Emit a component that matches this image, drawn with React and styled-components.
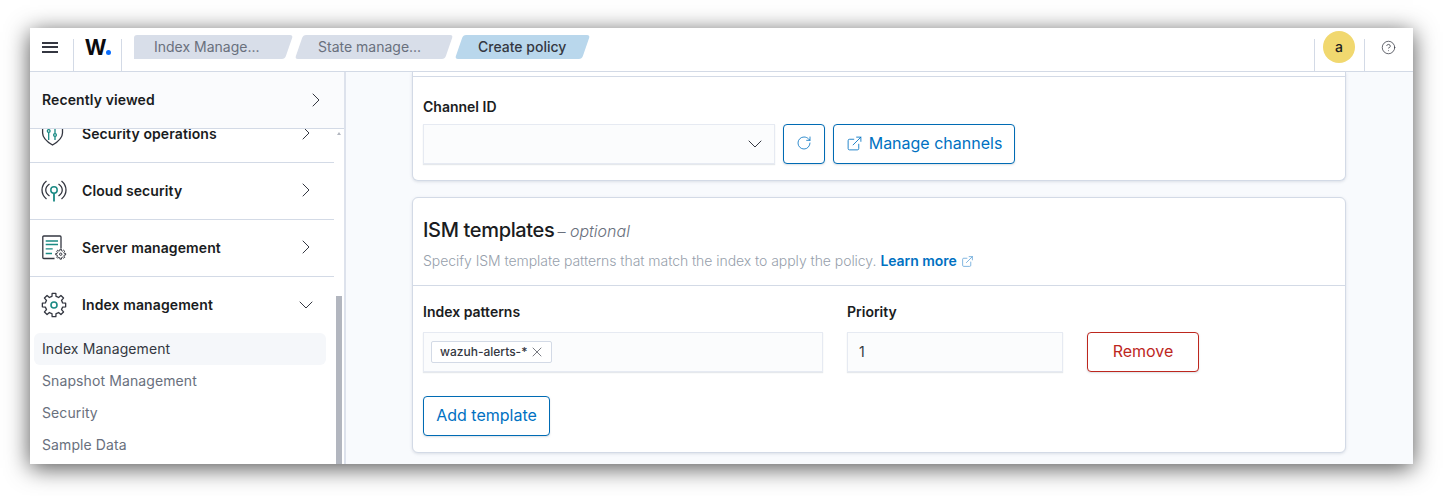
import React from "react"
import styled, { createGlobalStyle } from "styled-components"
import { ChevronRight, ChevronDown, ExternalLink, RotateCw, X, CircleHelp } from "lucide-react"

const GlobalStyle = createGlobalStyle`
  html, body {
    margin: 0;
    background: #fff;
    font-family: Inter, "Noto Sans", sans-serif;
    color: #1a1c21;
  }
  * {
    box-sizing: border-box;
  }
`

const Page = styled.div`
  padding: 28px 30px 32px;
`

const Window = styled.div`
  width: 1383px;
  height: 436px;
  background: #fff;
  display: flex;
  flex-direction: column;
  overflow: hidden;
  box-shadow: 0 4px 22px rgba(0, 0, 0, 0.68);
`

const Header = styled.header`
  height: 44px;
  flex: none;
  display: flex;
  align-items: stretch;
  border-bottom: 1px solid #d3dae6;
  background: #fff;
`

const HeaderCell = styled.div`
  width: ${(p) => p.$width}px;
  flex: none;
  display: flex;
  align-items: center;
  justify-content: center;
  position: relative;
  ${(p) =>
    p.$divider &&
    `&::after {
      content: "";
      position: absolute;
      ${p.$divider}: 0;
      top: 11px;
      bottom: 0;
      width: 1px;
      background: #d3dae6;
    }`}
`

const Burger = styled.span`
  width: 16px;
  height: 11px;
  margin: -5px 0 0 -5px;
  border-top: 2px solid #343741;
  border-bottom: 2px solid #343741;
  position: relative;
  &::after {
    content: "";
    position: absolute;
    left: 0;
    right: 0;
    top: 2.5px;
    height: 2px;
    background: #343741;
  }
`

const Logo = styled.span`
  font-size: 21px;
  font-weight: 700;
  letter-spacing: -0.5px;
  color: #0b0b0f;
  line-height: 1;
  margin-top: -5px;
  display: flex;
  align-items: baseline;
`

const LogoDot = styled.i`
  width: 5px;
  height: 5px;
  border-radius: 50%;
  background: #0a6eff;
`

const Crumbs = styled.nav`
  flex: 1;
  display: flex;
  align-items: center;
  gap: 10px;
  padding: 0 0 5px 12px;
`

const Crumb = styled.span`
  height: 24px;
  width: ${(p) => p.$width}px;
  display: flex;
  align-items: center;
  padding: 0 0 2px ${(p) => (p.$first ? 20 : 19)}px;
  font-size: 14px;
  position: relative;
  z-index: 0;
  font-weight: ${(p) => (p.$active ? 500 : 400)};
  color: ${(p) => (p.$active ? "#343741" : "#69707d")};
  &::before {
    content: "";
    position: absolute;
    inset: 0;
    z-index: -1;
    border-radius: 3px;
    transform: skewX(-19deg);
    background: ${(p) => (p.$active ? "#b9d7ec" : "#d8dee9")};
  }
  ${(p) =>
    p.$first &&
    `clip-path: inset(0 -10px 0 0);
    &::after {
      content: "";
      position: absolute;
      left: 0;
      top: 0;
      bottom: 0;
      width: 16px;
      z-index: -1;
      border-radius: 3px;
      background: #d8dee9;
    }`}
`

const Avatar = styled.span`
  width: 32px;
  height: 32px;
  border-radius: 50%;
  background: #f1d86f;
  display: flex;
  align-items: center;
  justify-content: center;
  font-size: 14px;
  font-weight: 500;
  margin-top: -6px;
  color: #1a1c21;
`

const HelpWrap = styled.span`
  display: flex;
  margin: -5px 0 0 -1px;
  color: #343741;
`

const Body = styled.div`
  flex: 1;
  min-height: 0;
  display: flex;
`

const Sidebar = styled.aside`
  width: 316px;
  flex: none;
  display: flex;
  flex-direction: column;
  border-right: 2px solid #dde2ec;
  position: relative;
  overflow: hidden;
  letter-spacing: 0.1px;
`

const Recent = styled.div`
  height: 57px;
  flex: none;
  display: flex;
  align-items: center;
  justify-content: space-between;
  padding: 0 16px 1px 12px;
  background: #fafbfd;
  border-bottom: 1px solid #d3dae6;
  font-size: 14px;
  font-weight: 600;
  position: relative;
  z-index: 1;
`

const NavList = styled.div`
  margin-top: -23px;
  width: 304px;
`

const NavRow = styled.div`
  height: 57px;
  display: flex;
  align-items: center;
  padding: 0 16px 2px 12px;
  font-size: 14px;
  font-weight: 600;
  border-bottom: ${(p) => (p.$plain ? "none" : "1px solid #d3dae6")};
`

const NavIcon = styled.svg`
  width: 24px;
  height: 24px;
  flex: none;
  margin-right: 16px;
  fill: none;
  overflow: visible;
  stroke: #343741;
  stroke-width: 1.3;
`

const NavLabel = styled.span`
  flex: 1;
`

const SubList = styled.div`
  display: flex;
  flex-direction: column;
  padding: 0 8px 0 4px;
  margin-top: -1px;
`

const SubItem = styled.div`
  height: 32px;
  display: flex;
  align-items: center;
  padding: 0 0 1px 8px;
  border-radius: 6px;
  font-size: 14px;
  background: ${(p) => (p.$active ? "#f5f7fa" : "transparent")};
  color: ${(p) => (p.$active ? "#343741" : "#69707d")};
`

const ScrollThumb = styled.div`
  position: absolute;
  right: 2px;
  bottom: 0;
  top: 224px;
  width: 6px;
  background: #b2b6bf;
`

const ScrollArrow = styled.div`
  position: absolute;
  right: 3px;
  top: 60px;
  width: 0;
  height: 0;
  border-left: 2.5px solid transparent;
  border-right: 2.5px solid transparent;
  border-bottom: 3px solid #b2b6bf;
`

const Main = styled.main`
  flex: 1;
  min-width: 0;
  background: #f8fafd;
  padding: 0 67px 0 66px;
  display: flex;
  flex-direction: column;
  gap: 16px;
  overflow: hidden;
`

const Card = styled.section`
  flex: none;
  background: #fff;
  border: 1px solid #d3dae6;
  border-radius: ${(p) => (p.$clipped ? "0 0 6px 6px" : "6px")};
  ${(p) => p.$clipped && "border-top: none;"}
  box-shadow: 0 1px 3px rgba(152, 162, 179, 0.3);
`

const Rule = styled.hr`
  margin: ${(p) => (p.$top ? "4px" : "0")} 0 0;
  border: none;
  border-top: 1px solid #d3dae6;
`

const CardBody = styled.div`
  padding: ${(p) => p.$padding};
`

const FieldLabel = styled.label`
  display: block;
  font-size: 14px;
  font-weight: 600;
  line-height: 20px;
  margin-bottom: ${(p) => p.$gap || 7}px;
`

const Row = styled.div`
  display: flex;
  align-items: flex-start;
  gap: ${(p) => p.$gap}px;
`

const Input = styled.div`
  width: ${(p) => p.$width}px;
  height: 40px;
  display: flex;
  align-items: center;
  justify-content: ${(p) => (p.$select ? "flex-end" : "flex-start")};
  padding: 0 ${(p) => (p.$select ? 7 : p.$pad || 11)}px;
  background: #fbfcfd;
  border: 1px solid #e6eaf2;
  box-shadow: 0 1px 1px rgba(152, 162, 179, 0.25);
  font-size: 14px;
  color: #343741;
`

const PriorityValue = styled.span`
  margin-top: -2px;
`

const Button = styled.button`
  height: 40px;
  width: ${(p) => p.$width}px;
  padding: 0 0 2px;
  display: flex;
  align-items: center;
  justify-content: center;
  gap: 6px;
  font: inherit;
  font-size: 16px;
  background: #fff;
  border-radius: 4px;
  border: 1px solid ${(p) => (p.$danger ? "#bd271e" : "#006bb4")};
  color: ${(p) => (p.$danger ? "#bd271e" : "#0071c2")};
  box-shadow: 0 1px 2px rgba(152, 162, 179, 0.35);
`

const Title = styled.h2`
  margin: 0;
  font-size: 20px;
  font-weight: 500;
  line-height: 28px;
  letter-spacing: -0.35px;
  display: flex;
  align-items: baseline;
  gap: 3px;
`

const Optional = styled.span`
  font-size: 16px;
  font-weight: 300;
  font-style: italic;
  letter-spacing: 0;
  color: #69707d;
`

const Description = styled.p`
  margin: 6px 0 0;
  font-size: 14px;
  line-height: 20px;
  font-weight: 300;
  letter-spacing: -0.05px;
  color: #979fac;
  display: flex;
  align-items: center;
`

const LearnMore = styled.a`
  color: #0071c2;
  font-weight: 600;
  margin-left: 4px;
  display: flex;
  align-items: center;
  gap: 4px;
`

const LearnIcon = styled(ExternalLink)`
  color: #5a9fd6;
  margin-top: 1px;
`

const Chip = styled.span`
  height: 22px;
  display: flex;
  align-items: center;
  gap: 2px;
  padding: 0 6px 1px 8px;
  background: #fff;
  border: 1px solid #d3dae6;
  border-radius: 2px;
  font-size: 12px;
  font-weight: 500;
  color: #343741;
`

const TemplateFields = styled(Row)`
  margin-bottom: 24px;
`

const Field = styled.div`
  flex: none;
`

const RemoveSlot = styled.div`
  margin-top: 30px;
`

const INK = "#343741"
const TEAL = "#1b8a84"

// cog outline with n teeth, used by the big and the small gear
const gearPath = (cx, cy, outer, inner, teeth) => {
  const points = []
  const step = (Math.PI * 2) / teeth
  for (let i = 0; i < teeth; i++) {
    const a = i * step - Math.PI / 2
    const spots = [
      [inner, a - step * 0.5],
      [inner, a - step * 0.3],
      [outer, a - step * 0.2],
      [outer, a + step * 0.2],
      [inner, a + step * 0.3],
    ]
    spots.forEach(([r, t]) => {
      points.push(`${(cx + r * Math.cos(t)).toFixed(2)} ${(cy + r * Math.sin(t)).toFixed(2)}`)
    })
  }
  return `M${points.join("L")}Z`
}

const ShieldIcon = () => (
  <NavIcon viewBox="0 0 24 24">
    <path d="M.6 3 10.500 0l10 3v9c0 5.500-4.800 9-10 12C5.400 21 .6 17.500.6 12z" />
    <g stroke={TEAL}>
      <path d="M6.700 8v11M13 8v11" />
      <circle cx="6.700" cy="10" r="1.400" fill="#fff" />
      <circle cx="13" cy="14" r="1.400" fill="#fff" />
    </g>
  </NavIcon>
)

const SignalIcon = () => (
  <NavIcon viewBox="0 0 24 24">
    <path d="M4.500 3C-1.500 8-1.500 16 4.500 21M19.500 3c6 5 6 13 0 18" />
    <path d="M7.500 6C2.500 9.500 2.500 14.500 7.500 18M16.500 6c5 3.500 5 8.500 0 12" />
    <circle cx="12" cy="12" r="3.200" stroke={TEAL} strokeWidth="1.500" />
    <path d="M12 15.200v8.300" stroke={TEAL} strokeWidth="1.800" />
  </NavIcon>
)

const ServerIcon = () => (
  <NavIcon viewBox="0 0 24 24">
    <path d="M12.500 23.500H1.800a1 1 0 0 1-1-1V2a1 1 0 0 1 1-1H18a1 1 0 0 1 1 1v11.500" />
    <path d="M3.700 6h12.300M3.700 9.500h12.300M3.700 13.800h7M3.700 18.500h6.300" stroke={TEAL} strokeWidth="1.300" />
    <path d={gearPath(18.700, 19.200, 5, 3.600, 8)} strokeWidth="1" />
    <circle cx="18.700" cy="19.200" r="1.200" strokeWidth="1" />
  </NavIcon>
)

const GearIcon = () => (
  <NavIcon viewBox="0 0 24 24">
    <path d={gearPath(12, 12, 11.800, 8.800, 8)} strokeLinejoin="round" />
    <circle cx="12" cy="12" r="3" stroke={TEAL} strokeWidth="1.600" />
  </NavIcon>
)

const navItems = [
  { label: "Security operations", icon: <ShieldIcon /> },
  { label: "Cloud security", icon: <SignalIcon /> },
  { label: "Server management", icon: <ServerIcon /> },
]

const subItems = ["Index Management", "Snapshot Management", "Security", "Sample Data"]

const App = () => (
  <Page>
    <GlobalStyle />
    <Window>
      <Header>
        <HeaderCell $width={44} $divider="right">
          <Burger />
        </HeaderCell>
        <HeaderCell $width={48} $divider="right">
          <Logo>
            W<LogoDot />
          </Logo>
        </HeaderCell>
        <Crumbs>
          <Crumb $first $width={155}>Index Manage...</Crumb>
          <Crumb $width={150}>State manage...</Crumb>
          <Crumb $active $width={127}>Create policy</Crumb>
        </Crumbs>
        <HeaderCell $width={50} $divider="left">
          <Avatar>a</Avatar>
        </HeaderCell>
        <HeaderCell $width={49} $divider="left">
          <HelpWrap>
            <CircleHelp size={15} strokeWidth={1.2} />
          </HelpWrap>
        </HeaderCell>
      </Header>
      <Body>
        <Sidebar>
          <Recent>
            Recently viewed
            <ChevronRight size={24} strokeWidth={1} color={INK} />
          </Recent>
          <NavList>
            {navItems.map((item) => (
              <NavRow key={item.label}>
                {item.icon}
                <NavLabel>{item.label}</NavLabel>
                <ChevronRight size={24} strokeWidth={1} color={INK} />
              </NavRow>
            ))}
            <NavRow $plain>
              <GearIcon />
              <NavLabel>Index management</NavLabel>
              <ChevronDown size={24} strokeWidth={1} color={INK} />
            </NavRow>
            <SubList>
              {subItems.map((name, i) => (
                <SubItem key={name} $active={i === 0}>{name}</SubItem>
              ))}
            </SubList>
          </NavList>
          <ScrollArrow />
          <ScrollThumb />
        </Sidebar>
        <Main>
          <Card $clipped>
            <Rule $top />
            <CardBody $padding="20px 10px 16px">
              <FieldLabel>Channel ID</FieldLabel>
              <Row $gap={8}>
                <Input $select $width={352}>
                  <ChevronDown size={24} strokeWidth={1} color={INK} />
                </Input>
                <Button $width={42}>
                  <RotateCw size={16} strokeWidth={1.2} />
                </Button>
                <Button $width={182}>
                  <ExternalLink size={17} strokeWidth={1.2} />
                  Manage channels
                </Button>
              </Row>
            </CardBody>
          </Card>
          <Card>
            <CardBody $padding="18px 10px 14px">
              <Title>
                ISM templates <Optional>– optional</Optional>
              </Title>
              <Description>
                Specify ISM template patterns that match the index to apply the policy.
                <LearnMore>
                  Learn more <LearnIcon size={13} strokeWidth={1.4} />
                </LearnMore>
              </Description>
            </CardBody>
            <Rule />
            <CardBody $padding="16px 10px 16px">
              <TemplateFields $gap={24}>
                <Field>
                  <FieldLabel $gap={10}>Index patterns</FieldLabel>
                  <Input $width={400} $pad={7}>
                    <Chip>
                      wazuh-alerts-*
                      <X size={16} strokeWidth={1} />
                    </Chip>
                  </Input>
                </Field>
                <Field>
                  <FieldLabel $gap={10}>Priority</FieldLabel>
                  <Input $width={216}>
                    <PriorityValue>1</PriorityValue>
                  </Input>
                </Field>
                <RemoveSlot>
                  <Button $danger $width={112}>Remove</Button>
                </RemoveSlot>
              </TemplateFields>
              <Button $width={127}>Add template</Button>
            </CardBody>
          </Card>
        </Main>
      </Body>
    </Window>
  </Page>
)

export default App
